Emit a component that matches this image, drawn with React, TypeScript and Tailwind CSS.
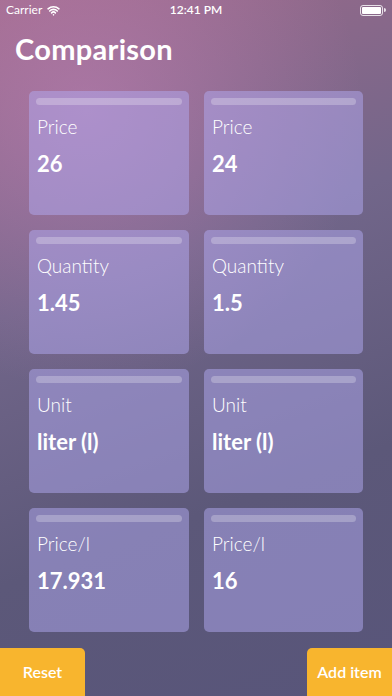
import { Wifi } from 'lucide-react';

const rows = [
  ['Price', '26', '24'],
  ['Quantity', '1.45', '1.5'],
  ['Unit', 'liter (l)', 'liter (l)'],
  ['Price/l', '17.931', '16'],
];

function Card({ label, value }: { label: string; value: string }) {
  return (
    <div className="h-[124px] rounded-[5px] bg-[#b2aaf2]/50 px-[7px] pt-[7px]">
      <div className="h-[7px] rounded-full bg-white/25" />
      <div className="mt-[10px] pl-[1px] text-[19px] font-light leading-[24px] text-white">{label}</div>
      <div className="mt-[12px] pl-[1px] text-[22px] font-bold leading-[26px] text-white">{value}</div>
    </div>
  );
}

export default function App() {
  return (
    <div
      className="relative flex h-[696px] w-[392px] flex-col overflow-hidden bg-[radial-gradient(circle_at_22%_16%,rgba(205,135,195,0.45),transparent_42%),linear-gradient(160deg,#9e6a8a_0%,#72668a_38%,#5c5879_70%,#58557a_100%)] text-white"
      style={{ fontFamily: 'Lato, "Noto Sans", sans-serif' }}
    >
      <div className="flex h-[20px] items-center justify-between px-[6px] text-[12px]">
        <div className="flex w-[100px] items-center gap-[5px]">
          <span>Carrier</span>
          <Wifi className="h-[13px] w-[13px]" strokeWidth={3} />
        </div>
        <span className="font-semibold">12:41 PM</span>
        <div className="flex w-[100px] justify-end">
          <div className="flex items-center">
            <div className="flex h-[11px] w-[23px] items-center rounded-[3px] border border-white/80 p-[1px]">
              <div className="h-full w-full rounded-[1px] bg-white" />
            </div>
            <div className="ml-[1px] h-[4px] w-[1.5px] rounded-r bg-white/80" />
          </div>
        </div>
      </div>

      <h1 className="mt-[12px] pl-[15px] text-[29px] font-bold leading-[33px] tracking-[0.3px]">Comparison</h1>

      <div className="mt-[26px] grid grid-cols-[160px_159px] gap-[15px] pl-[29px]">
        {rows.map(([label, a, b]) => [
          <Card key={label + 'a'} label={label} value={a} />,
          <Card key={label + 'b'} label={label} value={b} />,
        ])}
      </div>

      <div className="mt-auto flex items-end justify-between">
        <button className="h-[48px] w-[85px] rounded-tr-[5px] bg-[#f8b52e] text-[16px] font-semibold text-white">
          Reset
        </button>
        <button className="h-[48px] w-[85px] rounded-tl-[5px] bg-[#f8b52e] text-[16px] font-semibold text-white">
          Add item
        </button>
      </div>
    </div>
  );
}
